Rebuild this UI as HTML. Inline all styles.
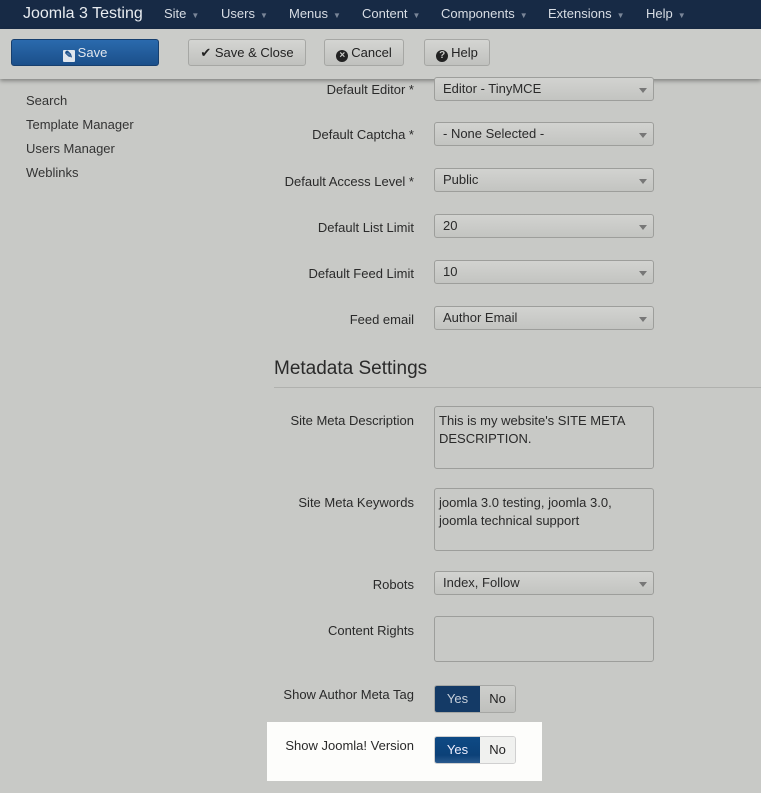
<!DOCTYPE html>
<html><head><style>
*{box-sizing:border-box;margin:0;padding:0}
body{width:761px;height:793px;background:#c8c9c6;font-family:"Liberation Sans",sans-serif;font-size:13px;color:#2a2a2a;position:relative;overflow:hidden}
.nav{position:absolute;left:0;top:0;width:761px;height:29px;background:#172a45;color:#d8dde4}
.nav span{position:absolute;top:6px;font-size:13px}
.nav .c{font-size:8px;color:#7a8698;margin-left:5px;position:static}
.tb{position:absolute;left:0;top:29px;width:761px;height:50px;background:#cbccc9;box-shadow:0 2px 4px rgba(0,0,0,.35)}
.btn{position:absolute;top:10px;height:27px;border:1px solid #a6a7a4;border-radius:3px;background:linear-gradient(#d4d5d2,#c0c1be);font-size:13px;text-align:center;line-height:25px;color:#222}
.save{background:linear-gradient(#2a6aad,#1b4f8a);border-color:#173f6e;color:#e0e6ee}
.ic{display:inline-block;width:12px;height:12px;border-radius:50%;background:#222;color:#cbccc9;font-size:10px;line-height:12px;font-weight:bold;vertical-align:-1px;margin-right:3px}
.side{position:absolute;left:26px;color:#333}
.lbl{position:absolute;right:347px;text-align:right;color:#2a2a2a}
.sel{position:absolute;left:434px;width:220px;height:24px;border:1px solid #9d9e9b;border-radius:3px;background:linear-gradient(#d2d3d0,#c3c4c1);padding-left:8px;line-height:22px}
.sel:after{content:"";position:absolute;right:6px;top:10px;border:4px solid transparent;border-top:5px solid #777;border-bottom:0}
.ta{position:absolute;left:434px;width:220px;border:1px solid #9d9e9b;border-radius:3px;background:#c8c9c6;padding:5px 4px;line-height:18px}
.tg{position:absolute;left:434px;width:82px;height:28px;border:1px solid #a6a7a4;border-radius:3px;overflow:hidden;font-size:13px}
.tg b{position:absolute;left:0;top:0;width:45px;height:100%;background:#143a66;color:#c7d0db;font-weight:normal;text-align:center;line-height:26px}
.tg i{position:absolute;left:45px;top:0;right:0;height:100%;background:linear-gradient(#cecfcc,#bfc0bd);font-style:normal;text-align:center;line-height:26px;color:#222}
</style></head><body>
<div class="nav">
<span style="left:23px;top:5px;font-size:16px;color:#e8ecf0">Joomla 3 Testing</span>
<span style="left:164px">Site<span class="c">▼</span></span>
<span style="left:221px">Users<span class="c">▼</span></span>
<span style="left:289px">Menus<span class="c">▼</span></span>
<span style="left:362px">Content<span class="c">▼</span></span>
<span style="left:441px">Components<span class="c">▼</span></span>
<span style="left:548px">Extensions<span class="c">▼</span></span>
<span style="left:646px">Help<span class="c">▼</span></span>
</div>
<div class="tb">
<div class="btn save" style="left:11px;width:148px"><span class="ic" style="border-radius:1px;background:#e0e6ee;color:#1b4f8a">✎</span>Save</div>
<div class="btn" style="left:188px;width:118px">✔ Save &amp; Close</div>
<div class="btn" style="left:324px;width:80px"><span class="ic">×</span>Cancel</div>
<div class="btn" style="left:424px;width:66px"><span class="ic">?</span>Help</div>
</div>
<div class="side" style="top:93px">Search</div>
<div class="side" style="top:117px">Template Manager</div>
<div class="side" style="top:141px">Users Manager</div>
<div class="side" style="top:165px">Weblinks</div>

<div class="lbl" style="top:82px">Default Editor *</div><div class="sel" style="top:77px">Editor - TinyMCE</div>
<div class="lbl" style="top:127px">Default Captcha *</div><div class="sel" style="top:122px">- None Selected -</div>
<div class="lbl" style="top:174px">Default Access Level *</div><div class="sel" style="top:168px">Public</div>
<div class="lbl" style="top:220px">Default List Limit</div><div class="sel" style="top:214px">20</div>
<div class="lbl" style="top:266px">Default Feed Limit</div><div class="sel" style="top:260px">10</div>
<div class="lbl" style="top:312px">Feed email</div><div class="sel" style="top:306px">Author Email</div>

<div style="position:absolute;left:274px;top:358px;font-size:19px;color:#2a2a2a">Metadata Settings</div>
<div style="position:absolute;left:274px;top:387px;width:487px;height:1px;background:#b0b1ae"></div>

<div class="lbl" style="top:413px">Site Meta Description</div><div class="ta" style="top:406px;height:63px">This is my website's SITE META DESCRIPTION.</div>
<div class="lbl" style="top:495px">Site Meta Keywords</div><div class="ta" style="top:488px;height:63px">joomla 3.0 testing, joomla 3.0, joomla technical support</div>
<div class="lbl" style="top:577px">Robots</div><div class="sel" style="top:571px">Index, Follow</div>
<div class="lbl" style="top:623px">Content Rights</div><div class="ta" style="top:616px;height:46px"></div>
<div class="lbl" style="top:687px">Show Author Meta Tag</div>
<div class="tg" style="top:685px"><b>Yes</b><i>No</i></div>

<div style="position:absolute;left:267px;top:722px;width:275px;height:59px;background:#fdfdfb"></div>
<div class="lbl" style="top:738px">Show Joomla! Version</div>
<div class="tg" style="top:736px;border-color:#d0d0d0"><b style="background:linear-gradient(#0e4a85,#0c4178 70%,#2a5a8e);color:#eef">Yes</b><i style="background:#f0f1ef">No</i></div>
</body></html>
